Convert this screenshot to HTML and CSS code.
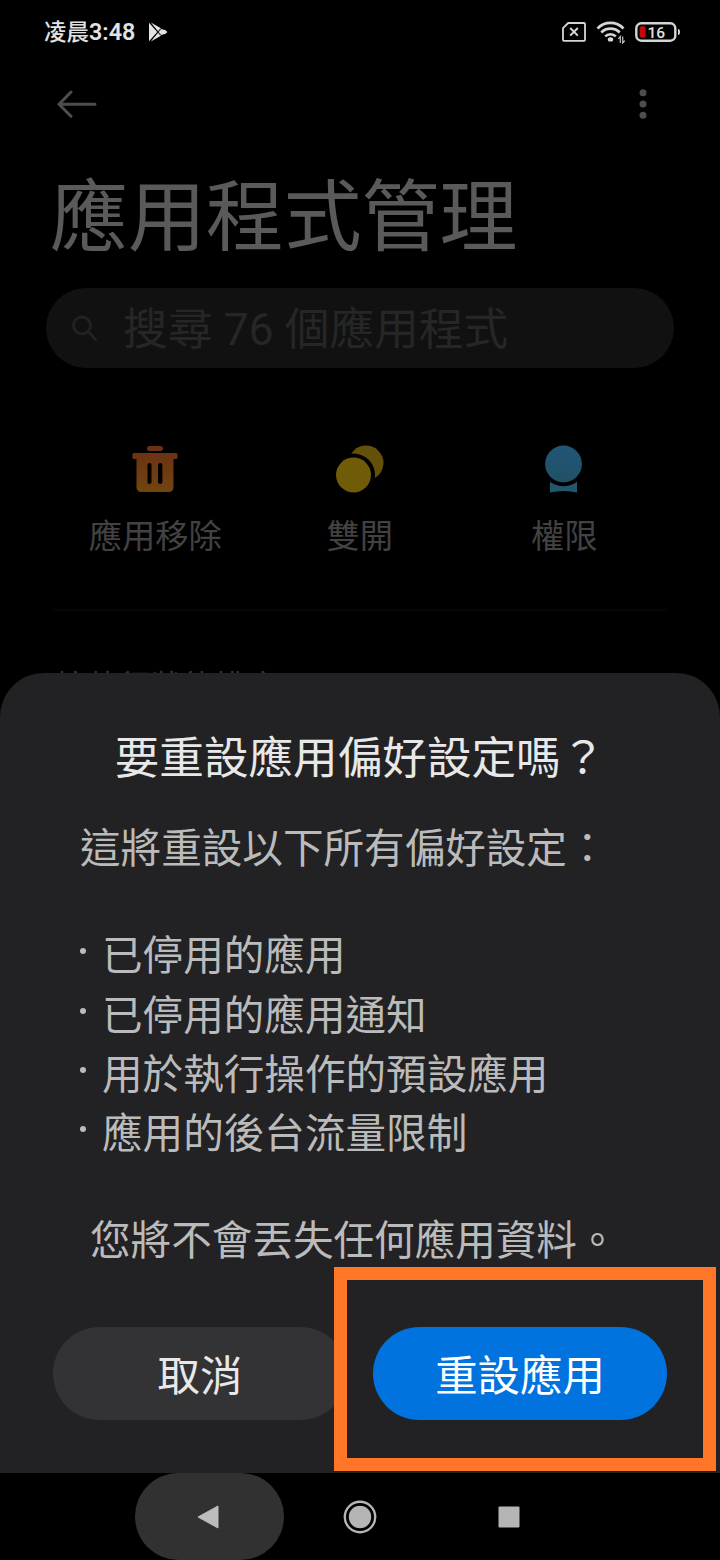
FILE: index.html
```html
<!DOCTYPE html>
<html lang="zh-Hant">
<head>
<meta charset="utf-8">
<title>應用程式管理</title>
<link rel="stylesheet" href="styles.css">
</head>
<body>
<div class="screen">
  <header class="status">
    <span class="clock">凌晨<b>3:48</b></span>
    <svg class="play" width="20" height="20" viewBox="0 0 20 20"><path fill="#e2e2e2" d="M1 .8 9.300 10 1 19.200zM2.400.2l11 6.200-3.200 3.200zM2.400 19.800l11-6.200-3.200-3.200zM13.500 7 10.500 10l3 3 2-.8h1.300L19.500 10l-2.700-2.200h-1.300z"/><path d="M2 0 12.500 13.500M2 20 12.500 6.500" stroke="#000" stroke-width=".7"/></svg>
    <div class="indicators">
      <svg width="24" height="20" viewBox="0 0 24 20"><path fill="none" stroke="#d6d6d6" stroke-width="1.800" stroke-linejoin="round" d="M6.200 1H22a1 1 0 0 1 1 1v15.800a1 1 0 0 1-1 1H2a1 1 0 0 1-1-1V6.200z"/><path stroke="#d6d6d6" stroke-width="2" d="m8.200 6 7.600 7.600m0-7.600-7.600 7.600"/></svg>
      <svg class="wifi" width="30" height="23" viewBox="0 0 30 23"><g fill="none" stroke="#d6d6d6" stroke-width="2.700"><path d="M1.500 7.500a18 18 0 0 1 26 0"/><path d="M5.300 11.500a13 13 0 0 1 18.400 0"/><path d="M9.200 15.400a7.600 7.600 0 0 1 10.600 0"/></g><ellipse cx="14.500" cy="18.400" rx="2.700" ry="2.200" fill="#d6d6d6"/><path fill="none" stroke="#c4c4c4" stroke-width="1.200" d="M24.300 22v-6.500l-2 2.300M26.700 15.500V22l2-2.300"/></svg>
      <svg class="battery" width="46" height="20" viewBox="0 0 46 20"><rect x="1.300" y="1.300" width="39" height="17.400" rx="5" fill="none" stroke="#d6d6d6" stroke-width="2.400"/><rect x="4.600" y="4.300" width="6" height="11.400" rx="2" fill="#c00a0a"/><path d="M43 7q2 0 2 3t-2 3z" fill="#d6d6d6"/><text x="12.500" y="15.600" class="level">16</text></svg>
    </div>
  </header>
  <div class="toolbar">
    <svg width="40" height="28" viewBox="0 0 40 28"><path fill="none" stroke="#4e4e4e" stroke-width="3" stroke-linecap="round" stroke-linejoin="round" d="M38 14.300H2.500M14 2 2 14.300l12 12"/></svg>
    <svg width="8" height="30" viewBox="0 0 8 30" fill="#4e4e4e"><circle cx="4" cy="3.700" r="3.500"/><circle cx="4" cy="15" r="3.500"/><circle cx="4" cy="26.300" r="3.500"/></svg>
  </div>
  <h1 class="title">應用程式管理</h1>
  <div class="search">
    <svg width="26" height="26" viewBox="0 0 26 26"><g fill="none" stroke="#222" stroke-width="3"><circle cx="10" cy="10.500" r="8.500"/><path d="m16 16.500 7.500 8" stroke-linecap="round"/></g></svg>
    <span class="hint">搜尋 76 個應用程式</span>
  </div>
  <nav class="actions">
    <div class="action">
      <svg width="48" height="48" viewBox="0 0 48 48"><defs><linearGradient id="bin" gradientUnits="userSpaceOnUse" x1="0" y1="0" x2="0" y2="48"><stop stop-color="#6b2f14"/><stop offset="1" stop-color="#71450f"/></linearGradient></defs><path fill="url(#bin)" fill-rule="evenodd" d="M18.500 1h11a2.500 2.500 0 0 1 0 5h-11a2.500 2.500 0 0 1 0-5zM2.500 8h43l1 1v4l-1 1H42.500v28.500a4.500 4.500 0 0 1-4.500 4.500H10a4.500 4.500 0 0 1-4.500-4.500V14H2.500l-1-1V9zM16.500 20v17q0 2 2 2t2-2V20q0-2-2-2t-2 2zm10.500 0v17q0 2 2.200 2t2.200-2V20q0-2-2.200-2t-2.200 2z"/></svg>
      <span>應用移除</span>
    </div>
    <div class="action">
      <svg width="48" height="48" viewBox="0 0 48 48"><circle cx="30" cy="18" r="17.500" fill="#65500a"/><circle cx="17.500" cy="30" r="21.500" fill="#000"/><circle cx="17.500" cy="30" r="17.500" fill="#705b08"/></svg>
      <span>雙開</span>
    </div>
    <div class="action">
      <svg width="48" height="48" viewBox="0 0 48 48"><defs><linearGradient id="badge" x1="0" y1="0" x2="0" y2="1"><stop stop-color="#215575"/><stop offset="1" stop-color="#205167"/></linearGradient></defs><path fill="#24566c" d="M10 36h27v11.500q-13.500-3.200-27 0z"/><circle cx="23.500" cy="19" r="22.300" fill="#000"/><circle cx="23.500" cy="19" r="18.400" fill="url(#badge)"/></svg>
      <span>權限</span>
    </div>
  </nav>
  <div class="sort">按執行狀態排序</div>

  <section class="sheet">
    <h2 class="sheet-title">要重設應用偏好設定嗎？</h2>
    <p class="intro">這將重設以下所有偏好設定：</p>
    <ul class="list">
      <li>已停用的應用</li>
      <li>已停用的應用通知</li>
      <li>用於執行操作的預設應用</li>
      <li>應用的後台流量限制</li>
    </ul>
    <p class="note">您將不會丟失任何應用資料。</p>
    <div class="buttons">
      <div class="button">取消</div>
      <div class="button primary">重設應用</div>
    </div>
    <div class="highlight"></div>
  </section>

  <footer class="navbar">
    <div class="key pressed"><svg width="24" height="26" viewBox="0 0 24 26"><path fill="#bdbdbd" stroke="#bdbdbd" stroke-linejoin="round" d="M2 13 22 2v22z"/></svg></div>
    <div class="key"><svg width="34" height="34" viewBox="0 0 34 34"><circle cx="17" cy="17" r="15.200" fill="none" stroke="#b5b5b5" stroke-width="2.400"/><circle cx="17" cy="17" r="11.200" fill="#b5b5b5"/></svg></div>
    <div class="key"><svg width="22" height="22" viewBox="0 0 22 22"><rect x=".5" y=".5" width="21" height="21" rx="1" fill="#b5b5b5"/></svg></div>
  </footer>
</div>
</body>
</html>
```
FILE: styles.css
```css
* { box-sizing: border-box; margin: 0; padding: 0; }
body { background: #000; }
svg { display: block; flex: none; }
.screen {
  position: relative;
  width: 720px;
  height: 1560px;
  overflow: hidden;
  background: #000;
  display: flex;
  flex-direction: column;
  font-family: "Noto Sans CJK TC", sans-serif;
  white-space: nowrap;
}
.status {
  height: 64px;
  display: flex;
  align-items: center;
  padding: 0 39px 0 44px;
}
.clock { font-size: 22.500px; font-weight: 500; color: #e2e2e2; line-height: 30px; margin-top: -2px; }
.clock b { font-family: Roboto, sans-serif; font-size: 23.300px; font-weight: 600; }
.play { margin: -1px 0 0 13px; }
.indicators { margin-left: auto; display: flex; align-items: center; }
.wifi { margin: 1px 9px 0 10px; }
.level { font: 500 15.500px Roboto, sans-serif; fill: #e2e2e2; }
.toolbar {
  height: 80px;
  display: flex;
  align-items: center;
  justify-content: space-between;
  padding: 0 73.500px 0 57px;
}
.title {
  height: 144px;
  padding: 9px 0 0 50px;
  font-size: 77.900px;
  line-height: 116px;
  font-weight: 400;
  color: #5a5a5a;
}
.search {
  height: 80px;
  margin: 0 46px;
  padding-left: 26px;
  border-radius: 40px;
  background: #111;
  display: flex;
  align-items: center;
  gap: 25px;
}
.hint { font-family: Roboto, "Noto Sans CJK TC", sans-serif; font-size: 44.700px; line-height: 78px; padding-top: 3px; color: #262626; }
.actions {
  height: 243px;
  margin: 0 53px;
  padding-top: 77px;
  border-bottom: 2px solid #060606;
  display: grid;
  grid-template-columns: repeat(3, 204.500px);
}
.action {
  display: flex;
  flex-direction: column;
  align-items: center;
  gap: 17px;
  font-size: 33.300px;
  line-height: 48px;
  color: #424242;
}
.sort { padding: 50px 0 0 55px; font-size: 31.900px; line-height: 46px; color: #363636; }
.sheet {
  position: absolute;
  left: 0;
  right: 0;
  bottom: 87px;
  height: 800px;
  padding: 48px 53px 53px;
  border-radius: 44px 44px 0 0;
  background: #222224;
  display: flex;
  flex-direction: column;
  color: #bbb;
  font-size: 40.600px;
  line-height: 59.300px;
}
.sheet-title { font-size: 44.600px; line-height: 68px; font-weight: 400; color: #e8e8e8; text-align: center; }
.intro { margin: 27px 0 0 27px; }
.list { margin: 48px 0 0 27px; list-style: none; }
.list li { display: flex; align-items: center; gap: 16px; }
.list li::before { content: ""; width: 6px; height: 6px; margin-top: -3px; border-radius: 50%; background: #bbb; }
.note { margin: 48px 0 0 37px; }
.buttons { margin-top: auto; display: flex; gap: 26px; }
.button {
  flex: 1;
  height: 93px;
  border-radius: 46.500px;
  background: #333335;
  color: #e8e8e8;
  font-size: 42.400px;
  line-height: 91px;
  text-align: center;
}
.primary { background: #0073df; color: #fff; }
.highlight {
  position: absolute;
  left: 334px;
  top: 594px;
  width: 382px;
  height: 204px;
  border: 13px solid #ff7628;
}
.navbar {
  height: 87px;
  margin-top: auto;
  display: flex;
  justify-content: center;
}
.key { width: 149px; display: flex; align-items: center; justify-content: center; }
.pressed { margin-right: 1px; margin-left: -2px; padding-right: 3px; border-radius: 43.500px; background: #313131; }
```
